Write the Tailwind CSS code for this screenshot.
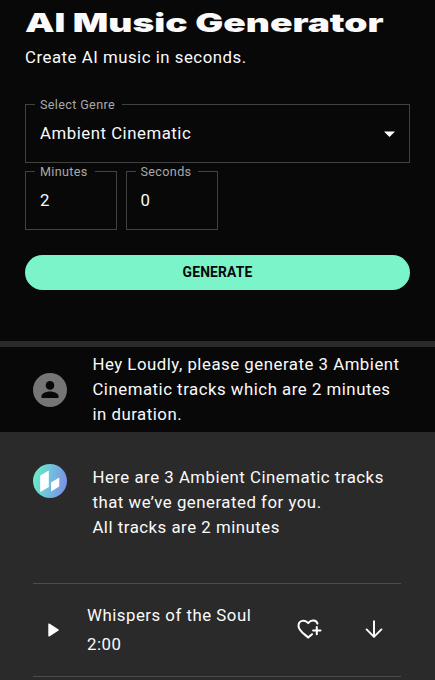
<!DOCTYPE html>
<html lang="en">
<head>
    <meta charset="UTF-8">
    <meta name="viewport" content="width=device-width, initial-scale=1.0">
    <title>AI Music Generator</title>
    <script src="https://cdn.jsdelivr.net/npm/@tailwindcss/browser@4"></script>
</head>
<body class="bg-[#2a2a2a] text-[#fafafa] font-['Roboto',sans-serif] text-[16.8px] leading-[25px] tracking-[0.52px] h-screen overflow-hidden">

    <!-- Generator form -->
    <section class="bg-[#080808] h-[341px] px-[25px] overflow-hidden">
        <h1 class="w-max mt-[7px] h-8 leading-8 font-['Inter',sans-serif] font-black text-[26px] tracking-normal origin-left scale-x-[1.43] whitespace-nowrap">AI Music Generator</h1>
        <p class="mt-[6px]">Create AI music in seconds.</p>

        <form class="mt-[27px]">
            <fieldset class="h-[66px] border border-[#424242] pl-[9px] pr-[14px]">
                <legend class="pl-[5px] pr-[7px] text-[12.6px] leading-[15px] tracking-[0.35px] text-[#a8a8a8]">Select Genre</legend>
                <div class="flex items-center justify-between pl-[5px] pt-[9px]">
                    <span>Ambient Cinematic</span>
                    <svg class="w-[11px] h-[6px]" viewBox="0 0 11 6" fill="#fff"><path d="M0 0.5h11L5.5 6z"/></svg>
                </div>
            </fieldset>
            <div class="flex gap-[8.5px] mt-px">
                <fieldset class="w-[92px] h-[66px] border border-[#424242] pl-[9px]">
                    <legend class="pl-[5px] pr-[7px] text-[12.6px] leading-[15px] tracking-[0.35px] text-[#a8a8a8]">Minutes</legend>
                    <div class="pl-[5px] pt-[9px]">2</div>
                </fieldset>
                <fieldset class="w-[92px] h-[66px] border border-[#424242] pl-[9px]">
                    <legend class="pl-[5px] pr-[7px] text-[12.6px] leading-[15px] tracking-[0.35px] text-[#a8a8a8]">Seconds</legend>
                    <div class="pl-[5px] pt-[9px]">0</div>
                </fieldset>
            </div>
            <button type="button" class="mt-[25px] w-full h-[35px] rounded-full bg-[#7bf4c9] text-[#080808] text-[13.8px] font-bold tracking-[0.2px]">GENERATE</button>
        </form>
    </section>

    <!-- User message -->
    <section class="mt-[6px] h-[85px] bg-[#080808] flex items-center pl-[33.4px]">
        <svg class="w-[34px] h-[34px] shrink-0" viewBox="0 0 34 34">
            <circle cx="17" cy="17" r="17" fill="#757575"/>
            <g fill="#080808">
                <circle cx="17" cy="12.4" r="4.3"/>
                <path d="M8.5 25v-2c0-2.9 5.7-4.4 8.5-4.4s8.5 1.5 8.5 4.4v2z"/>
            </g>
        </svg>
        <p class="ml-[25px] leading-[25.2px]">Hey Loudly, please generate 3 Ambient<br>Cinematic tracks which are 2 minutes<br>in duration.</p>
    </section>

    <!-- Reply -->
    <section class="pl-[33.4px] pr-[34px]">
        <div class="flex pt-[33px] h-[151px]">
            <svg class="-mt-px w-[34px] h-[34px] shrink-0" viewBox="0 0 34 34">
                <defs>
                    <linearGradient id="logo" x1="0" y1="0.4" x2="1" y2="0.6">
                        <stop offset="0" stop-color="#6cecc8"/>
                        <stop offset="0.5" stop-color="#70bfdc"/>
                        <stop offset="1" stop-color="#7d8de8"/>
                    </linearGradient>
                </defs>
                <circle cx="17" cy="17" r="17" fill="url(#logo)"/>
                <path fill="#fff" d="M7.2 11.6L15.8 6.4V23L7.2 28zM18 18.6L26.2 13.6V22.6L18 27.6z"/>
            </svg>
            <p class="ml-[25px] leading-[25.2px]">Here are 3 Ambient Cinematic tracks<br>that we’ve generated for you.<br>All tracks are 2 minutes</p>
        </div>

        <div class="h-[94px] border-y border-[#4c4c4c] flex items-center">
            <svg class="ml-[14.6px] -mt-px w-[11px] h-[14px]" viewBox="0 0 11 14"><path d="M1 1.2v11.6L10.2 7z" fill="#fff" stroke="#fff" stroke-width="1.4" stroke-linejoin="round"/></svg>
            <div class="ml-[28px] leading-[29.2px]">
                <p>Whispers of the Soul</p>
                <p>2:00</p>
            </div>
            <svg class="ml-auto -mt-[3px] w-[25px] h-[20px]" viewBox="0 0 25 20" fill="none" stroke="#fff" stroke-width="2" stroke-linecap="round" stroke-linejoin="round">
                <path d="M20.5 4.6C19.4 1.2 14.4 0.2 11.2 4.1C8 0.2 1.5 1.2 1.5 6.9C1.5 11.7 7.5 15 11.2 18.6L15 15.2"/>
                <path d="M19.8 7.9v7.4M16.1 11.6h7.4"/>
            </svg>
            <svg class="ml-[43px] mr-[18px] -mt-[3px] w-[18px] h-[18px]" viewBox="0 0 18 18" fill="none" stroke="#fff" stroke-width="1.9" stroke-linecap="round" stroke-linejoin="round"><path d="M9 1.2v15.4M1.6 9.4L9 16.8l7.4-7.4"/></svg>
        </div>
    </section>

</body>
</html>
